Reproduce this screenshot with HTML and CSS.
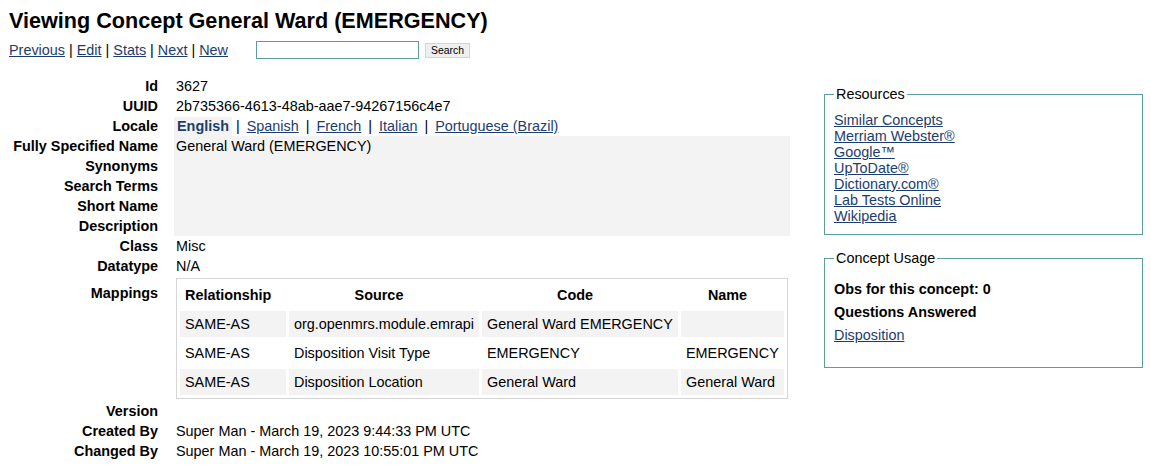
FILE: index.html
```html
<!DOCTYPE html>
<html>
<head>
<meta charset="utf-8">
<link rel="stylesheet" href="styles.css">
</head>
<body>
<h2 class="title">Viewing Concept General Ward (EMERGENCY)</h2>
<div class="nav">
  <span class="nav-links"><a href="#">Previous</a> | <a href="#">Edit</a> | <a href="#">Stats</a> | <a href="#">Next</a> | <a href="#">New</a></span>
  <form class="search">
    <input class="search-input" type="text">
    <button class="search-btn" type="button">Search</button>
  </form>
</div>
<div class="main">
  <div class="details">
    <div class="lbl">Id</div><div class="val">3627</div>
    <div class="lbl">UUID</div><div class="val">2b735366-4613-48ab-aae7-94267156c4e7</div>
    <div class="lbl">Locale</div>
    <div class="val val-locale"><span class="loc loc-active">English</span> | <a class="loc" href="#">Spanish</a> | <a class="loc" href="#">French</a> | <a class="loc" href="#">Italian</a> | <a class="loc" href="#">Portuguese (Brazil)</a></div>
    <div class="lbl">Fully Specified Name</div><div class="val shaded">General Ward (EMERGENCY)</div>
    <div class="lbl">Synonyms</div><div class="val shaded"></div>
    <div class="lbl">Search Terms</div><div class="val shaded"></div>
    <div class="lbl">Short Name</div><div class="val shaded"></div>
    <div class="lbl">Description</div><div class="val shaded"></div>
    <div class="lbl">Class</div><div class="val">Misc</div>
    <div class="lbl">Datatype</div><div class="val">N/A</div>
    <div class="lbl lbl-map">Mappings</div>
    <div class="val">
      <table class="maps">
        <colgroup>
          <col class="c1"><col class="c2"><col class="c3"><col class="c4">
        </colgroup>
        <thead>
          <tr><th>Relationship</th><th>Source</th><th>Code</th><th>Name</th></tr>
        </thead>
        <tbody>
          <tr><td>SAME-AS</td><td>org.openmrs.module.emrapi</td><td>General Ward EMERGENCY</td><td></td></tr>
          <tr><td>SAME-AS</td><td>Disposition Visit Type</td><td>EMERGENCY</td><td>EMERGENCY</td></tr>
          <tr><td>SAME-AS</td><td>Disposition Location</td><td>General Ward</td><td>General Ward</td></tr>
        </tbody>
      </table>
    </div>
    <div class="lbl">Version</div><div class="val"></div>
    <div class="lbl">Created By</div><div class="val">Super Man - March 19, 2023 9:44:33 PM UTC</div>
    <div class="lbl">Changed By</div><div class="val">Super Man - March 19, 2023 10:55:01 PM UTC</div>
  </div>
  <div class="side">
    <fieldset class="box box-res">
      <legend>Resources</legend>
      <a class="res" href="#">Similar Concepts</a>
      <a class="res" href="#">Merriam Webster®</a>
      <a class="res" href="#">Google™</a>
      <a class="res" href="#">UpToDate®</a>
      <a class="res" href="#">Dictionary.com®</a>
      <a class="res" href="#">Lab Tests Online</a>
      <a class="res" href="#">Wikipedia</a>
    </fieldset>
    <fieldset class="box box-usage">
      <legend>Concept Usage</legend>
      <div class="usage-line"><b>Obs for this concept: 0</b></div>
      <div class="usage-line"><b>Questions Answered</b></div>
      <div class="usage-line"><a href="#">Disposition</a></div>
    </fieldset>
  </div>
</div>
</body>
</html>
```
FILE: styles.css
```css
body {
  margin: 8px 8px 8px 9px;
  font-family: "Liberation Sans", Arial, sans-serif;
  font-size: 14.4px;
  color: #000;
  background: #fff;
}
a {
  color: #1c3d6b;
  text-decoration: underline;
}
.title {
  margin: 0;
  font-size: 21.6px;
  line-height: 25px;
  font-weight: bold;
}
.nav {
  display: flex;
  align-items: center;
  margin-top: 8px;
  height: 18px;
}
.search {
  display: flex;
  align-items: center;
  margin: 0 0 0 28px;
}
.search-input {
  box-sizing: border-box;
  width: 163px;
  height: 18px;
  border: 1px solid #5c9e9c;
  padding: 0 2px;
  margin: 0;
  outline: none;
}
.search-btn {
  box-sizing: border-box;
  margin: 0 0 0 6px;
  width: 45px;
  height: 15px;
  padding: 0;
  font-family: "Liberation Sans", Arial, sans-serif;
  font-size: 10.4px;
  line-height: 13px;
  background: #efefef;
  border: 1px solid #d4d4d4;
  color: #000;
}
.main {
  display: flex;
  align-items: flex-start;
  margin-top: 17px;
}
.details {
  flex: 1;
  min-width: 0;
  display: grid;
  grid-template-columns: 151px 1fr;
  column-gap: 14px;
  line-height: 16px;
}
.lbl {
  font-weight: bold;
  text-align: right;
  padding: 2px;
}
.lbl-map {
  padding-top: 9px;
}
.val {
  padding: 2px;
  min-height: 16px;
}
.val-locale {
  padding-left: 0;
}
.loc {
  padding: 1px 3px 2px;
}
.loc-active {
  font-weight: bold;
  color: #1c3d6b;
  background: #f3f3f3;
}
.shaded {
  background: #f3f3f3;
}
.maps {
  width: 612px;
  table-layout: fixed;
  border: 1px solid #d6d6d6;
  border-spacing: 3px;
  font-size: 14.4px;
  line-height: 16px;
}
.c1 { width: 106px; }
.c2 { width: 190px; }
.c3 { width: 196px; }
.c4 { width: 103px; }
.maps th {
  box-sizing: border-box;
  height: 26px;
  padding: 5px 15px 5px 5px;
  text-align: center;
  font-weight: bold;
  white-space: nowrap;
}
.maps td {
  box-sizing: border-box;
  height: 26px;
  padding: 5px;
  background: #f3f3f3;
  white-space: nowrap;
  overflow: hidden;
}
.maps tbody tr:nth-child(2) td {
  background: #fff;
}
.side {
  flex: none;
  width: 319px;
  margin-left: 35px;
  margin-top: 10px;
}
.box {
  margin: 0;
  border: 1px solid #5c9e9c;
  padding: 10px 9px;
  min-width: 0;
}
.box legend {
  padding: 0 2px;
  margin: 0;
  line-height: 16px;
  font-size: 14.4px;
}
.res {
  display: block;
  line-height: 16px;
}
.box-usage {
  margin-top: 15px;
  padding-top: 15px;
  padding-bottom: 24px;
}
.usage-line {
  line-height: 16px;
}
.usage-line + .usage-line {
  margin-top: 7px;
}
```
